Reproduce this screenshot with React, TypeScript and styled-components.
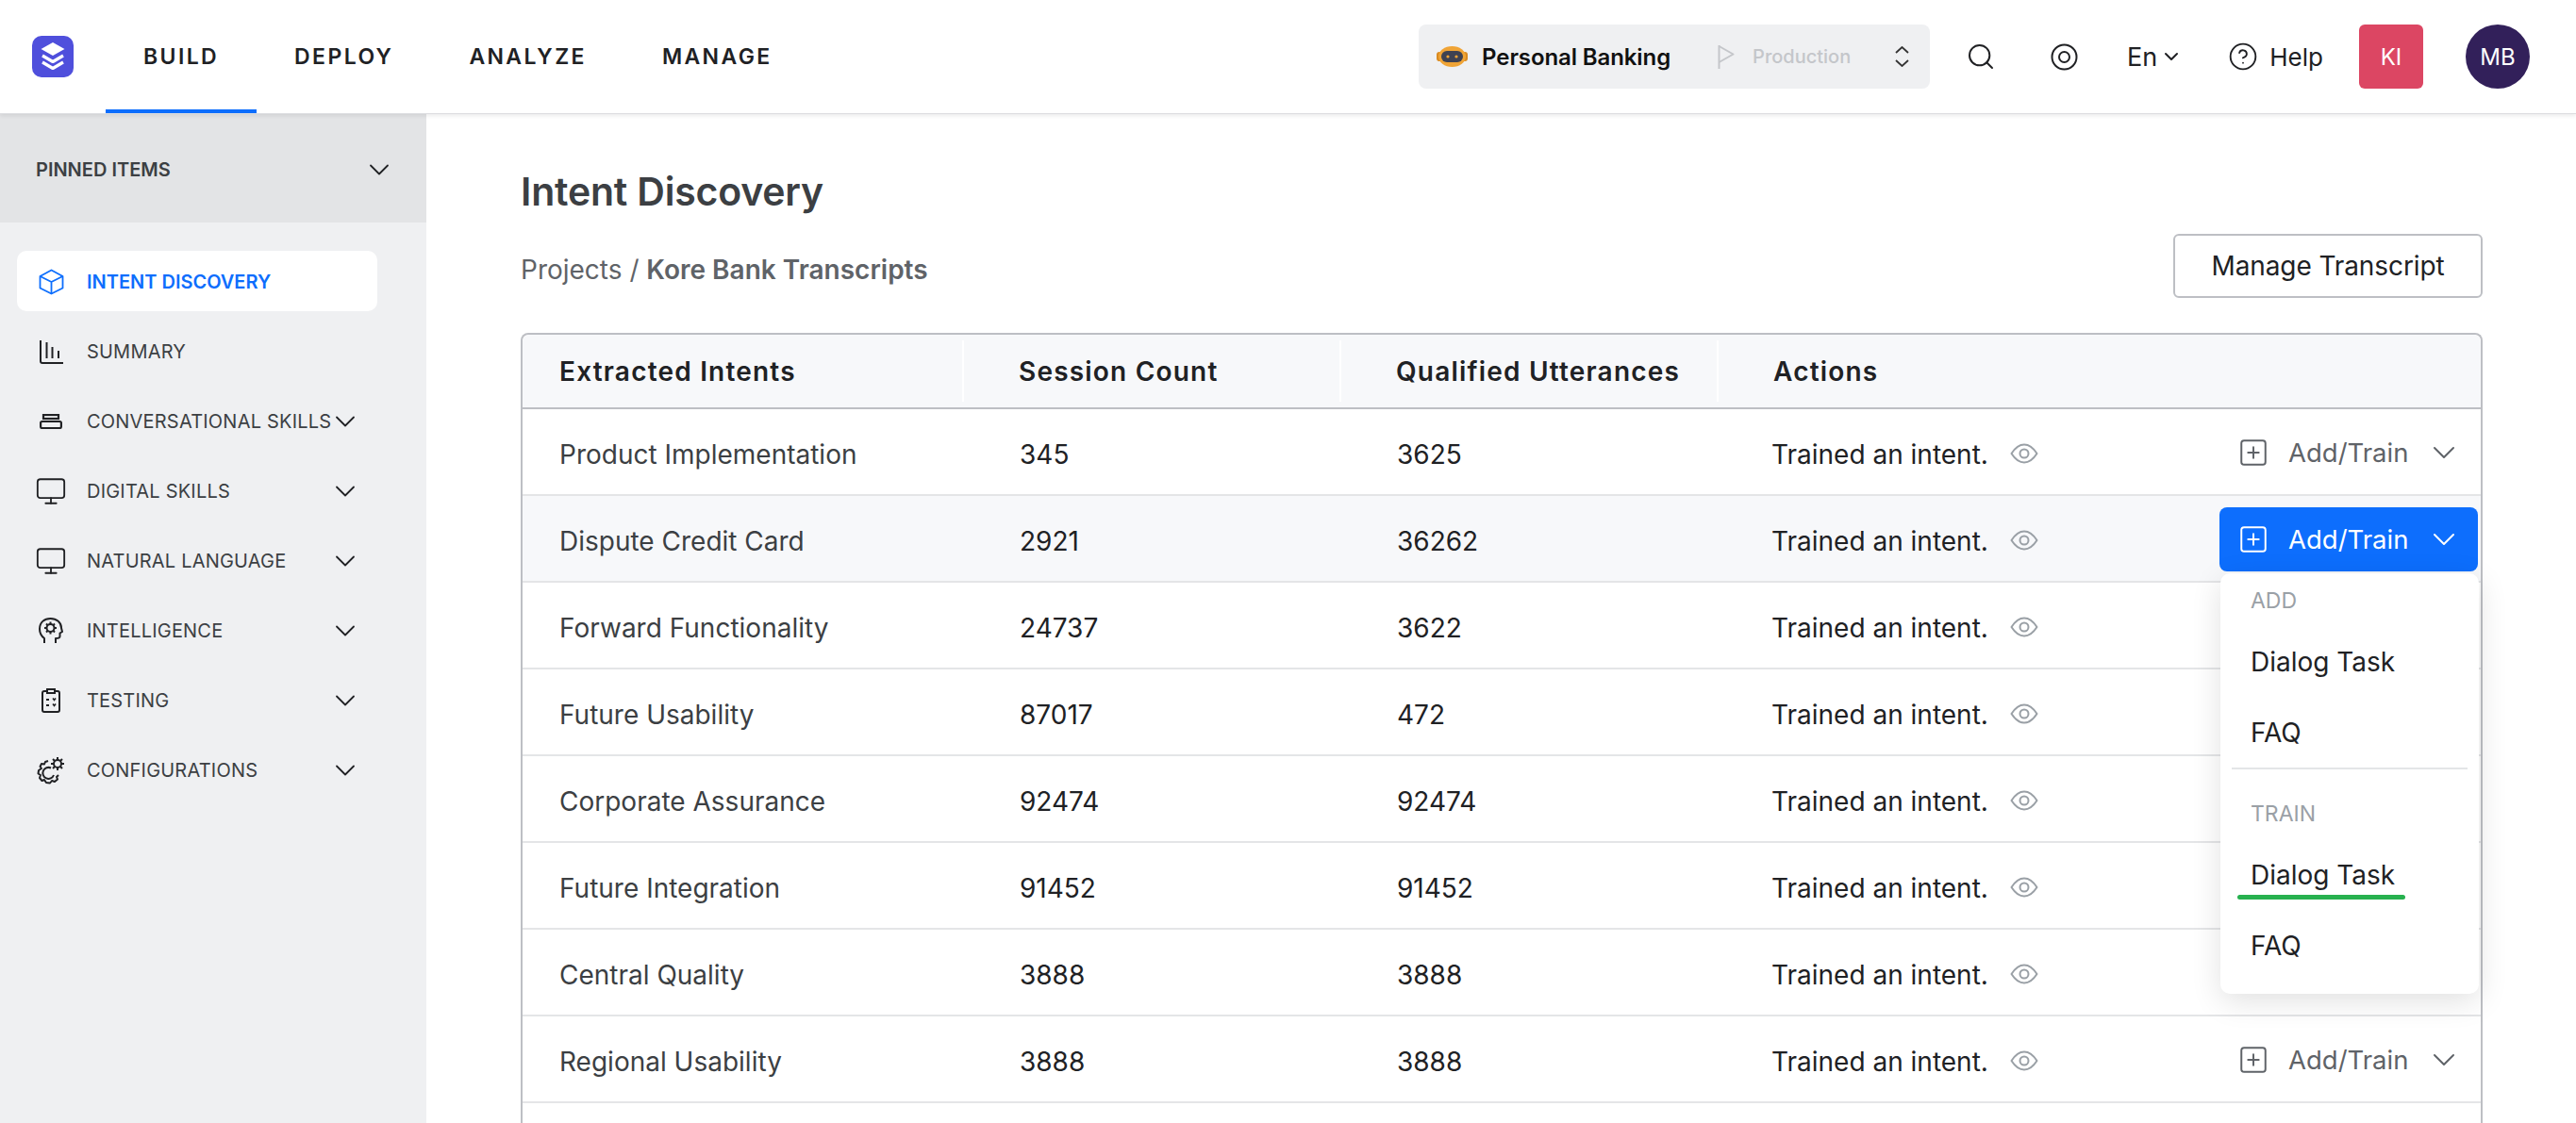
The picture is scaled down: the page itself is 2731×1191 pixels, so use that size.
import React from "react";
import styled, { createGlobalStyle } from "styled-components";
import { ChevronDown, CircleHelp, Monitor, Search, SquarePlus } from "lucide-react";

const GlobalStyle = createGlobalStyle`
  html, body {
    margin: 0;
    padding: 0;
    height: 100%;
    overflow: hidden;
    background: #fff;
    font-family: Inter, "Liberation Sans", sans-serif;
    color: #202124;
  }
  * { box-sizing: border-box; }
  svg { flex: none; }
`;

const Page = styled.div`
  width: 2731px;
  height: 1191px;
  display: flex;
  flex-direction: column;
  overflow: hidden;
`;

const TopBar = styled.header`
  height: 121px;
  flex: none;
  display: flex;
  align-items: center;
  padding: 0 49px 0 34px;
  background: #fff;
  border-bottom: 1px solid #dcdde0;
  box-shadow: 0 2px 4px rgba(0, 0, 0, 0.08);
  position: relative;
  z-index: 2;
`;

const Logo = styled.div`
  width: 44px;
  height: 44px;
  border-radius: 10px;
  background: #4f4fdc;
  display: flex;
  align-items: center;
  justify-content: center;
  margin-right: 34px;
`;

const Tabs = styled.nav`
  display: flex;
  height: 100%;
`;

const Tab = styled.a<{ $active?: boolean }>`
  padding: 4px 40px 0;
  display: flex;
  align-items: center;
  justify-content: center;
  font-size: 23px;
  font-weight: 600;
  letter-spacing: 2.4px;
  color: #202124;
  border-bottom: 4px solid ${(p) => (p.$active ? "#0d6efd" : "transparent")};
`;

const TopRight = styled.div`
  margin-left: auto;
  display: flex;
  align-items: center;
  height: 68px;
`;

const BotPill = styled.div`
  width: 542px;
  height: 68px;
  border-radius: 8px;
  background: #eff0f2;
  display: flex;
  align-items: center;
  padding: 0 22px 0 19px;
  margin-right: 38px;
`;

const BotName = styled.span`
  font-size: 24px;
  font-weight: 600;
  color: #111;
  margin-left: 15px;
  letter-spacing: -0.1px;
`;

const EnvName = styled.span`
  font-size: 20px;
  font-weight: 500;
  color: #c4c6ca;
  margin-left: 19px;
`;

const FlagWrap = styled.span`
  margin-left: 50px;
  display: flex;
`;

const PillEnd = styled.span`
  margin-left: auto;
  display: flex;
  color: #333;
`;

const TopIcon = styled.span<{ $gap: number }>`
  display: flex;
  color: #202124;
  margin-right: ${(p) => p.$gap}px;
`;

const Lang = styled.span`
  display: flex;
  align-items: center;
  gap: 3px;
  font-size: 27px;
  color: #202124;
  margin-right: 48px;
`;

const Help = styled.span`
  display: flex;
  align-items: center;
  gap: 12px;
  font-size: 26px;
  color: #202124;
  margin-right: 38px;
`;

const UserSquare = styled.div`
  width: 68px;
  height: 68px;
  border-radius: 6px;
  background: #dc4663;
  color: #fff;
  display: flex;
  align-items: center;
  justify-content: center;
  font-size: 24px;
  margin-right: 45px;
`;

const UserCircle = styled.div`
  width: 68px;
  height: 68px;
  border-radius: 50%;
  background: #32205a;
  color: #fff;
  display: flex;
  align-items: center;
  justify-content: center;
  font-size: 24px;
`;

const Body = styled.div`
  flex: 1;
  display: flex;
  min-height: 0;
`;

const Sidebar = styled.aside`
  width: 452px;
  flex: none;
  background: #eff0f2;
`;

const Pinned = styled.div`
  height: 115px;
  background: #e3e4e6;
  display: flex;
  align-items: center;
  justify-content: space-between;
  padding: 2px 32px 0 38px;
  font-size: 20px;
  font-weight: 600;
  color: #3c3f43;
  margin-bottom: 30px;
`;

const NavList = styled.div`
  display: flex;
  flex-direction: column;
  gap: 10px;
  padding: 0 52px 0 18px;
`;

const NavItem = styled.div<{ $active?: boolean }>`
  height: 64px;
  display: flex;
  align-items: center;
  padding: 2px 25px 0 22px;
  border-radius: 10px;
  font-size: 20px;
  white-space: nowrap;
  letter-spacing: ${(p) => (p.$active ? "0" : "0.2px")};
  font-weight: ${(p) => (p.$active ? 600 : 400)};
  color: ${(p) => (p.$active ? "#0d6efd" : "#3c3f43")};
  background: ${(p) => (p.$active ? "#fff" : "transparent")};
`;

const NavIcon = styled.span<{ $active?: boolean }>`
  width: 28px;
  display: flex;
  justify-content: center;
  margin-right: 24px;
  color: ${(p) => (p.$active ? "#0d6efd" : "#202124")};
`;

const NavChevron = styled.span`
  margin-left: auto;
  width: 18px;
  display: flex;
  justify-content: center;
  color: #202124;
`;

const Main = styled.main`
  flex: 1;
  min-width: 0;
  padding: 56px 99px 0 100px;
`;

const Title = styled.h1`
  margin: 0;
  font-size: 41px;
  line-height: 52px;
  font-weight: 600;
  color: #3c3f43;
  letter-spacing: -0.2px;
`;

const Crumbs = styled.div`
  display: flex;
  align-items: center;
  justify-content: space-between;
  height: 68px;
  margin-top: 19px;
  margin-bottom: 37px;
`;

const CrumbText = styled.div`
  font-size: 28px;
  color: #5f6368;
  padding-top: 7px;
`;

const CrumbStrong = styled.span`
  font-weight: 600;
`;

const ManageButton = styled.button`
  width: 328px;
  height: 68px;
  border: 2px solid #bdbfc4;
  border-radius: 6px;
  background: #fff;
  font-family: inherit;
  font-size: 28px;
  letter-spacing: -0.1px;
  color: #202124;
`;

const Table = styled.div`
  position: relative;
  border: 2px solid #bdbfc4;
  border-radius: 8px 8px 0 0;
  border-bottom: none;
  height: 900px;
`;

const columns = "466px 400px 400px 1fr";

const HeaderRow = styled.div`
  display: grid;
  grid-template-columns: ${columns};
  height: 79px;
  background: #f7f8fa;
  border-bottom: 2px solid #bdbfc4;
  border-radius: 8px 8px 0 0;
`;

const HeaderCell = styled.div<{ $divider?: boolean; $pad: number }>`
  display: flex;
  align-items: center;
  padding-left: ${(p) => p.$pad}px;
  margin: 6px 0;
  font-size: 28px;
  font-weight: 600;
  color: #202124;
  letter-spacing: 1.2px;
  border-left: ${(p) => (p.$divider ? "2px solid #fff" : "none")};
`;

const Row = styled.div<{ $hover?: boolean }>`
  display: grid;
  grid-template-columns: ${columns};
  height: 92px;
  border-bottom: 2px solid #e4e5e7;
  background: ${(p) => (p.$hover ? "#f7f8fa" : "#fff")};
`;

const NameCell = styled.div`
  display: flex;
  align-items: center;
  padding: 5px 0 0 39px;
  font-size: 28px;
  color: #3c3f43;
`;

const CountCell = styled.div`
  display: flex;
  align-items: center;
  padding: 5px 0 0 61px;
  font-size: 28px;
  color: #202124;
`;

const ActionCell = styled.div`
  display: flex;
  align-items: center;
  padding: 2px 0 0 58px;
  font-size: 28px;
  color: #202124;
`;

const ActionText = styled.span`
  padding-top: 3px;
`;

const EyeWrap = styled.span`
  display: flex;
  margin: 1px 0 0 23px;
  color: #9aa0a6;
`;

const AddTrain = styled.div<{ $open?: boolean }>`
  margin-left: auto;
  margin-right: 3px;
  width: 274px;
  height: 68px;
  display: flex;
  align-items: center;
  padding: 0 16px 0 19px;
  border-radius: 8px;
  font-size: 27.5px;
  background: ${(p) => (p.$open ? "#0d6efd" : "transparent")};
  color: ${(p) => (p.$open ? "#fff" : "#5f6368")};
`;

const AddLabel = styled.span`
  margin-left: 20px;
`;

const AddChevron = styled.span`
  margin-left: auto;
  display: flex;
`;

const Menu = styled.div`
  position: absolute;
  top: 253px;
  right: 2px;
  width: 274px;
  height: 446px;
  padding: 0 12px;
  background: #fff;
  border-radius: 10px;
  box-shadow: 0 8px 32px rgba(0, 0, 0, 0.12);
  z-index: 3;
`;

const MenuLabel = styled.div<{ $top: number }>`
  padding: ${(p) => p.$top}px 0 0 20px;
  margin-bottom: 14px;
  line-height: 28px;
  font-size: 23px;
  color: #9aa0a6;
`;

const MenuItem = styled.div`
  padding-left: 20px;
  height: 75px;
  line-height: 75px;
  font-size: 28px;
  color: #202124;
`;

const MenuDivider = styled.div`
  height: 2px;
  margin-top: -1px;
  background: #e4e5e7;
`;

const Underlined = styled.span`
  position: relative;
  display: inline-block;
  &::after {
    content: "";
    position: absolute;
    left: -14px;
    width: 178px;
    bottom: 12px;
    height: 5px;
    border-radius: 3px;
    background: #27b14f;
  }
`;

const LogoIcon = () => (
  <svg width="26" height="30" viewBox="0 0 26 30" fill="none">
    <path d="M13 0 L25.5 7 L13 14 L0.5 7 Z" fill="#fff" />
    <path d="M2 14 L13 20.5 L24 14" stroke="#fff" strokeWidth="3.2" strokeLinejoin="round" />
    <path d="M2 21 L13 27.5 L24 21" stroke="#fff" strokeWidth="3.2" strokeLinejoin="round" />
  </svg>
);

const RobotIcon = () => (
  <svg width="33" height="22" viewBox="0 0 33 22">
    <rect x="0" y="6" width="33" height="10" rx="3" fill="#d98a20" />
    <ellipse cx="16.5" cy="11" rx="14.5" ry="11" fill="#f0a436" />
    <rect x="5" y="5" width="23" height="12" rx="6" fill="#3f4252" />
    <circle cx="12" cy="11" r="1.6" fill="#f0a436" />
    <circle cx="21" cy="11" r="1.6" fill="#f0a436" />
  </svg>
);

const FlagIcon = () => (
  <svg width="18" height="25" viewBox="0 0 18 25" fill="none" stroke="#c4c6ca" strokeWidth="2">
    <path d="M1.5 0 V25" />
    <path d="M1.5 1 L16.5 9.5 L1.5 18" strokeLinejoin="round" />
  </svg>
);

const UpDownIcon = () => (
  <svg width="15" height="22" viewBox="0 0 15 22" fill="none" stroke="currentColor" strokeWidth="1.8">
    <path d="M1 7 L7.5 1 L14 7" />
    <path d="M1 15 L7.5 21 L14 15" />
  </svg>
);

const TargetIcon = () => (
  <svg width="29" height="29" viewBox="0 0 29 29" fill="none" stroke="currentColor" strokeWidth="2">
    <circle cx="14.5" cy="14.5" r="13" />
    <circle cx="14.5" cy="14.5" r="5.5" />
  </svg>
);

const EyeIcon = () => (
  <svg width="30" height="22" viewBox="0 0 30 22" fill="none" stroke="currentColor" strokeWidth="2">
    <path d="M1.5 11 C6 4 10 1.5 15 1.5 C20 1.5 24 4 28.5 11 C24 18 20 20.5 15 20.5 C10 20.5 6 18 1.5 11 Z" strokeLinejoin="round" />
    <circle cx="15" cy="11" r="4.5" />
  </svg>
);

const CubeIcon = () => (
  <svg width="27" height="28" viewBox="0 0 27 28" fill="none" stroke="currentColor" strokeWidth="1.8" strokeLinejoin="round">
    <path d="M13.5 1.5 L25.5 8 V20.5 L13.5 26.5 L1.5 20.5 V8 Z" />
    <path d="M1.5 8 L13.5 14 L25.5 8 M13.5 14 V26.5" />
  </svg>
);

const SummaryIcon = () => (
  <svg width="26" height="25" viewBox="0 0 26 25" fill="none" stroke="currentColor" strokeWidth="2">
    <path d="M2 0 V22 Q2 24 4 24 H26" />
    <path d="M8.5 2 V19 M14.5 7 V19 M21 11 V19" />
  </svg>
);

const StackIcon = () => (
  <svg width="24" height="16" viewBox="0 0 24 16" fill="none" stroke="currentColor" strokeWidth="2.2">
    <rect x="4" y="1" width="16" height="4" />
    <rect x="1.1" y="8" width="21.8" height="7" rx="1.5" />
  </svg>
);

const BrainIcon = () => (
  <svg width="26" height="28" viewBox="0 0 26 28" fill="none" stroke="currentColor" strokeWidth="2">
    <path d="M6 27 V22 C2 19 1 15 1 12 C1 5 6 1 12.5 1 C19 1 24 5 24 11 L25 15 L22.5 16.5 V20 C22.5 21 21 22 18 22 V27" strokeLinejoin="round" />
    <circle cx="12.5" cy="11" r="4" />
    <path d="M12.5 4.5 V7 M12.5 15 V17.5 M6 11 H8.5 M16.5 11 H19 M8 6.5 L9.7 8.2 M15.3 13.8 L17 15.5 M8 15.5 L9.7 13.8 M15.3 8.2 L17 6.5" />
  </svg>
);

const ChecklistIcon = () => (
  <svg width="20" height="26" viewBox="0 0 20 26" fill="none" stroke="currentColor" strokeWidth="2">
    <rect x="1" y="3" width="18" height="22" rx="2" />
    <rect x="6" y="1" width="8" height="4" fill="#eff0f2" />
    <path d="M5 12 H8 M5 18 H8" />
    <path d="M12 10.5 L13.5 12.5 L15 10.5 M12 16.5 L13.5 18.5 L15 16.5" strokeWidth="1.6" />
  </svg>
);

const ConfigIcon = () => (
  <svg width="30" height="30" viewBox="0 0 30 30" fill="none" stroke="currentColor" strokeWidth="2">
    <path
      d="M12 5 L9 6 L8 8.5 L5 8 L3.5 11 L5 13 L2 15 L1.5 18.5 L4 20 L3 23 L5.5 26 L8 25 L10 28 L14 28.5 L16 26 L19 27 L22 24.5 L21 22 L23 20"
      strokeLinejoin="round"
    />
    <path d="M15 12.5 A6 6 0 1 0 18 20" />
    <circle cx="22" cy="8" r="4" />
    <path d="M22 1 V4 M22 12 V15 M15 8 H18 M26 8 H29 M17 3 L19 5 M25 11 L27 13 M17 13 L19 11 M25 5 L27 3" />
  </svg>
);

const navItems: { label: string; icon: React.ReactNode; chevron?: boolean; active?: boolean }[] = [
  { label: "INTENT DISCOVERY", icon: <CubeIcon />, active: true },
  { label: "SUMMARY", icon: <SummaryIcon /> },
  { label: "CONVERSATIONAL SKILLS", icon: <StackIcon />, chevron: true },
  { label: "DIGITAL SKILLS", icon: <Monitor size={34} strokeWidth={1.3} />, chevron: true },
  { label: "NATURAL LANGUAGE", icon: <Monitor size={34} strokeWidth={1.3} />, chevron: true },
  { label: "INTELLIGENCE", icon: <BrainIcon />, chevron: true },
  { label: "TESTING", icon: <ChecklistIcon />, chevron: true },
  { label: "CONFIGURATIONS", icon: <ConfigIcon />, chevron: true },
];

const rows = [
  { name: "Product Implementation", sessions: "345", utterances: "3625", button: true },
  { name: "Dispute Credit Card", sessions: "2921", utterances: "36262", button: true, open: true },
  { name: "Forward Functionality", sessions: "24737", utterances: "3622" },
  { name: "Future Usability", sessions: "87017", utterances: "472" },
  { name: "Corporate Assurance", sessions: "92474", utterances: "92474" },
  { name: "Future Integration", sessions: "91452", utterances: "91452" },
  { name: "Central Quality", sessions: "3888", utterances: "3888" },
  { name: "Regional Usability", sessions: "3888", utterances: "3888", button: true },
];

const App: React.FC = () => {
  return (
    <Page>
      <GlobalStyle />
      <TopBar>
        <Logo>
          <LogoIcon />
        </Logo>
        <Tabs>
          <Tab $active>BUILD</Tab>
          <Tab>DEPLOY</Tab>
          <Tab>ANALYZE</Tab>
          <Tab>MANAGE</Tab>
        </Tabs>
        <TopRight>
          <BotPill>
            <RobotIcon />
            <BotName>Personal Banking</BotName>
            <FlagWrap>
              <FlagIcon />
            </FlagWrap>
            <EnvName>Production</EnvName>
            <PillEnd>
              <UpDownIcon />
            </PillEnd>
          </BotPill>
          <TopIcon $gap={58}>
            <Search size={32} strokeWidth={1.5} />
          </TopIcon>
          <TopIcon $gap={52}>
            <TargetIcon />
          </TopIcon>
          <Lang>
            En
            <ChevronDown size={24} strokeWidth={2} />
          </Lang>
          <Help>
            <CircleHelp size={32} strokeWidth={1.4} />
            Help
          </Help>
          <UserSquare>KI</UserSquare>
          <UserCircle>MB</UserCircle>
        </TopRight>
      </TopBar>
      <Body>
        <Sidebar>
          <Pinned>
            PINNED ITEMS
            <ChevronDown size={36} strokeWidth={1.2} color="#202124" />
          </Pinned>
          <NavList>
            {navItems.map((item) => (
              <NavItem key={item.label} $active={item.active}>
                <NavIcon $active={item.active}>{item.icon}</NavIcon>
                {item.label}
                {item.chevron && (
                  <NavChevron>
                    <ChevronDown size={36} strokeWidth={1.2} />
                  </NavChevron>
                )}
              </NavItem>
            ))}
          </NavList>
        </Sidebar>
        <Main>
          <Title>Intent Discovery</Title>
          <Crumbs>
            <CrumbText>
              Projects / <CrumbStrong>Kore Bank Transcripts</CrumbStrong>
            </CrumbText>
            <ManageButton>Manage Transcript</ManageButton>
          </Crumbs>
          <Table>
            <HeaderRow>
              <HeaderCell $pad={39}>Extracted Intents</HeaderCell>
              <HeaderCell $pad={58} $divider>Session Count</HeaderCell>
              <HeaderCell $pad={58} $divider>Qualified Utterances</HeaderCell>
              <HeaderCell $pad={58} $divider>Actions</HeaderCell>
            </HeaderRow>
            {rows.map((row) => (
              <Row key={row.name} $hover={row.open}>
                <NameCell>{row.name}</NameCell>
                <CountCell>{row.sessions}</CountCell>
                <CountCell>{row.utterances}</CountCell>
                <ActionCell>
                  <ActionText>Trained an intent.</ActionText>
                  <EyeWrap>
                    <EyeIcon />
                  </EyeWrap>
                  {row.button && (
                    <AddTrain $open={row.open}>
                      <SquarePlus size={34} strokeWidth={1.4} />
                      <AddLabel>Add/Train</AddLabel>
                      <AddChevron>
                        <ChevronDown size={40} strokeWidth={1.2} />
                      </AddChevron>
                    </AddTrain>
                  )}
                </ActionCell>
              </Row>
            ))}
            <Menu>
              <MenuLabel $top={15}>ADD</MenuLabel>
              <MenuItem>Dialog Task</MenuItem>
              <MenuItem>FAQ</MenuItem>
              <MenuDivider />
              <MenuLabel $top={33}>TRAIN</MenuLabel>
              <MenuItem>
                <Underlined>Dialog Task</Underlined>
              </MenuItem>
              <MenuItem>FAQ</MenuItem>
            </Menu>
          </Table>
        </Main>
      </Body>
    </Page>
  );
};

export default App;
